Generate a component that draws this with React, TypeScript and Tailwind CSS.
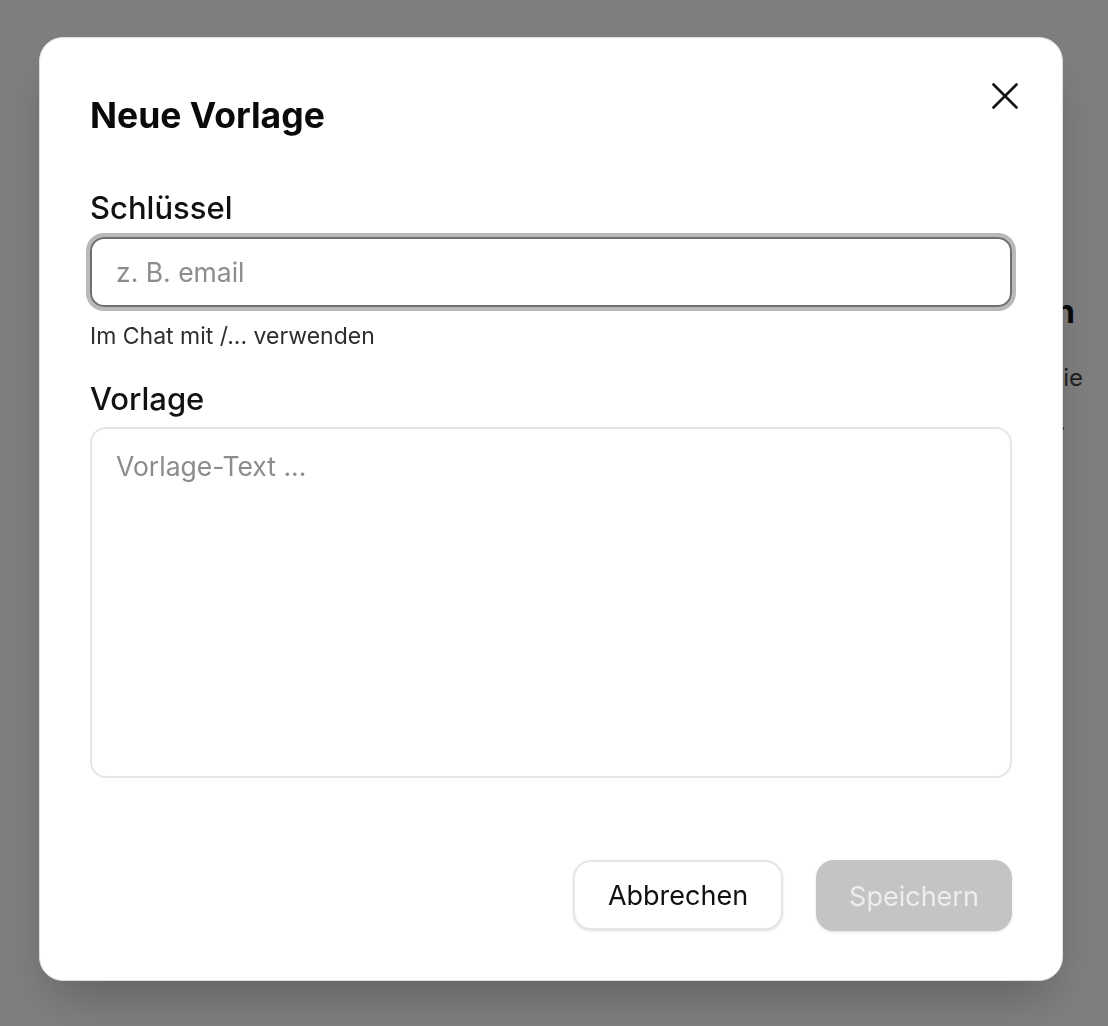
import React from 'react';

const font = {fontFamily: 'Inter, "Noto Sans", sans-serif'};

export default function App() {
  return <div className="relative min-h-screen h-[1026px] bg-white overflow-hidden" style={font}>
    <Background/>
    <div className="fixed inset-0 bg-black/50 flex items-start pl-[39px] pt-[37px]">
      <NewTemplateDialog/>
    </div>
  </div>;
}

const Background = () => {
  return <div className="flex flex-col items-end pt-[290px] pr-[33px] text-[#111]">
    <h2 className="text-[32px] font-bold leading-[44px]">Noch keine Vorlagen</h2>
    <p className="mt-[20px] text-[24px] text-[#444] leading-[48px] mr-[-8px]">Lege Vorlagen an, die</p>
    <p className="mt-[4px] text-[24px] text-[#444] leading-[32px] mr-[9px]">du schnell nutzen kannst.</p>
  </div>;
}

const NewTemplateDialog = () => {
  return <div className="relative w-[1024px] bg-white rounded-[24px] border border-[#dedede] shadow-2xl flex flex-col px-[50px] pt-[58px] pb-[49px]">
    <button className="absolute right-[44px] top-[45px] w-[26px] h-[26px] text-[#111]">
      <svg viewBox="0 0 26 26" width="26" height="26" fill="none" stroke="currentColor" strokeWidth="2.6" strokeLinecap="round">
        <path d="M1.5 1.5 24.5 24.5M24.5 1.5 1.5 24.5"/>
      </svg>
    </button>
    <h1 className="text-[35.5px] leading-[40px] font-bold text-[#0a0a0a]">Neue Vorlage</h1>

    <label className="mt-[54px] text-[31px] leading-[36px] font-medium text-[#111]">Schlüssel</label>
    <input
      placeholder="z. B. email"
      className="mt-[11px] h-[70px] w-full rounded-[14px] border-2 border-[#6f6f6f] ring-4 ring-[#b9b9b9] px-[24px] text-[26.5px] text-[#111] placeholder:text-[#8c8c8c] outline-none"
    />
    <div className="mt-[15px] text-[23px] leading-[28px] text-[#2e2e2e]">Im Chat mit /... verwenden</div>

    <label className="mt-[31px] text-[31px] leading-[36px] font-medium text-[#111]">Vorlage</label>
    <textarea
      placeholder="Vorlage-Text ..."
      className="mt-[10px] h-[351px] w-full resize-none rounded-[16px] border-2 border-[#e6e6e6] px-[24px] py-[19px] text-[26.5px] leading-[36px] text-[#111] placeholder:text-[#8c8c8c] outline-none"
    />

    <div className="mt-[82px] flex justify-end gap-[33px]">
      <button className="h-[70px] w-[210px] rounded-[18px] border-2 border-[#e6e6e6] bg-white text-[27px] leading-[40px] pt-[2px] text-[#111] shadow-sm">Abbrechen</button>
      <button disabled className="h-[71px] w-[196px] rounded-[18px] bg-[#c4c4c4] text-[27px] leading-[40px] pt-[2px] text-[#ededed] shadow-sm">Speichern</button>
    </div>
  </div>;
}
